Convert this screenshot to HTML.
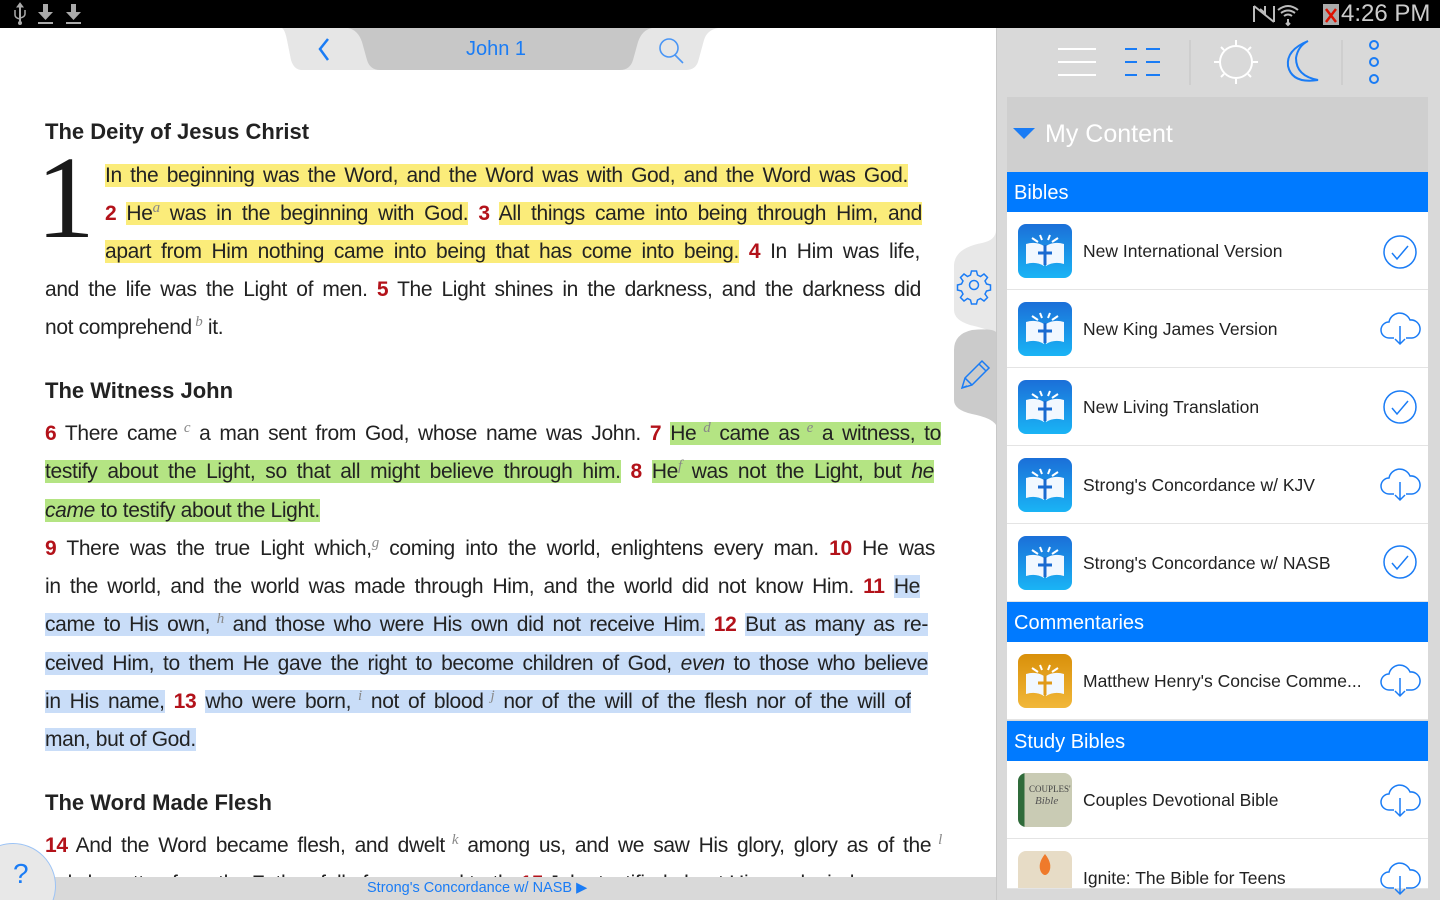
<!DOCTYPE html>
<html><head><meta charset="utf-8"><style>
*{margin:0;padding:0;box-sizing:border-box}
html,body{width:1440px;height:900px;overflow:hidden}
body{background:#fff;font-family:"Liberation Sans",sans-serif;position:relative}
.sb{position:absolute;left:0;top:0;width:1440px;height:28px;background:#000}
.ln{position:absolute;height:38px;line-height:38px;font-size:21px;color:#222;white-space:nowrap;letter-spacing:-0.35px}
.j{text-align:justify;text-align-last:justify;white-space:normal;overflow:hidden}
.n{color:#b3121a;font-weight:bold}
.y{background:#fbec7a}
.g{background:#b4e483}
.b{background:#c9ddf8}
sup{font-family:"Liberation Serif",serif;font-style:italic;color:#888;font-size:15px;vertical-align:8px;line-height:0}
.h{position:absolute;left:45px;font-size:22px;font-weight:bold;color:#222}
.rp{position:absolute;left:996px;top:28px;width:444px;height:872px;background:#d9d9d9;border-left:1px solid #c8c8c8}
.sec{position:absolute;left:1007px;width:421px;height:40px;background:#007aff;color:#fff;font-size:20px;line-height:42px;padding-left:7px}
.row{position:absolute;left:1007px;width:421px;height:78px;background:#fff;border-bottom:1px solid #e4e4e4}
.row .t{position:absolute;left:76px;top:0;line-height:78px;font-size:17.5px;color:#222}
.row .ic{position:absolute;left:11px;top:12px;width:54px;height:54px;border-radius:8px}
</style></head><body>
<div class="sb">
<svg width="100" height="28" style="position:absolute;left:8px;top:0">
<g fill="#aaa" stroke="#aaa"><line x1="12" y1="5" x2="12" y2="24" stroke-width="2"/><path d="M7 10 v5 q0 3 5 4 M17 10 v4 q0 3 -5 4" fill="none" stroke-width="1.5"/><circle cx="12" cy="23" r="1.5"/><path d="M9 7 l3-4 3 4z"/>
<rect x="35" y="4" width="5" height="9" stroke="none"/><path d="M30 12h15l-7.5 8z" stroke="none"/><rect x="30" y="22" width="15" height="2" stroke="none"/>
<rect x="63" y="4" width="5" height="9" stroke="none"/><path d="M58 12h15l-7.5 8z" stroke="none"/><rect x="58" y="22" width="15" height="2" stroke="none"/></g></svg>
<svg width="90" height="28" style="position:absolute;left:1250px;top:0"><g stroke="#bbb" fill="none" stroke-width="2"><path d="M4 6v16M4 6l20 16M24 6v16M10 9l5 4v-7"/><path d="M48 10q-10-8-20 0M45 13q-7-5-14 0M42 16q-4-3-8 0"/><path d="M38 19v6M36 23l2 2 2-2"/></g><rect x="73" y="4" width="16" height="21" fill="#aaa"/><path d="M76 9l10 13M86 9l-10 13" stroke="#d10" stroke-width="2.5"/></svg>
<div style="position:absolute;left:1341px;top:0;color:#ccc;font-size:24px;line-height:28px">4:26 PM</div>
</div>

<svg width="440" height="44" style="position:absolute;left:282px;top:28px">
<path d="M0 0 H436 Q425 2 422 12 L416 34 Q413 42 404 42 H20 Q12 42 9 32 L5 12 Q3 2 0 0Z" fill="#e6e6e6"/>
<path d="M62 0 H370 Q360 2 356 14 L351 32 Q348 42 338 42 H98 Q88 42 85 32 L80 14 Q76 2 66 0Z" fill="#c7c7c7"/>
<path d="M46 11 L38 21 L46 32" stroke="#1a7cf5" stroke-width="2.5" fill="none"/>
<circle cx="387" cy="20" r="9" stroke="#4a96f5" stroke-width="1.6" fill="none"/><line x1="393" y1="27" x2="401" y2="35" stroke="#4a96f5" stroke-width="1.6"/>
</svg>
<div style="position:absolute;left:466px;top:38px;color:#1a7cf5;font-size:20px">John 1</div>

<div class="h" style="top:119px">The Deity of Jesus Christ</div>
<div style="position:absolute;left:36px;top:138px;font-family:'Liberation Serif',serif;font-size:118px;line-height:120px;color:#1a1a1a">1</div>

<div class="ln j" style="left:105px;top:157px;width:803px"><span class="y">In the beginning was the Word, and the Word was with God, and the Word was God.</span></div>
<div class="ln j" style="left:105px;top:195px;width:817px"><span class="n">2</span> <span class="y">He<sup>a</sup> was in the beginning with God.</span> <span class="n">3</span> <span class="y">All things came into being through Him, and</span></div>
<div class="ln j" style="left:105px;top:233px;width:815px"><span class="y">apart from Him nothing came into being that has come into being.</span> <span class="n">4</span> In Him was life,</div>
<div class="ln j" style="left:45px;top:271px;width:876px">and the life was the Light of men. <span class="n">5</span> The Light shines in the darkness, and the darkness did</div>
<div class="ln" style="left:45px;top:309px">not comprehend<sup> b</sup> it.</div>

<div class="h" style="top:378px">The Witness John</div>
<div class="ln j" style="left:45px;top:415px;width:896px"><span class="n">6</span> There came<sup> c</sup> a man sent from God, whose name was John. <span class="n">7</span> <span class="g">He<sup> d</sup> came as<sup> e</sup> a witness, to</span></div>
<div class="ln j" style="left:45px;top:453px;width:889px"><span class="g">testify about the Light, so that all might believe through him.</span> <span class="n">8</span> <span class="g">He<sup>f</sup> was not the Light, but <i>he</i></span></div>
<div class="ln" style="left:45px;top:492px"><span class="g"><i>came</i> to testify about the Light.</span></div>
<div class="ln j" style="left:45px;top:530px;width:890px"><span class="n">9</span> There was the true Light which,<sup>g</sup> coming into the world, enlightens every man. <span class="n">10</span> He was</div>
<div class="ln j" style="left:45px;top:568px;width:875px">in the world, and the world was made through Him, and the world did not know Him. <span class="n">11</span> <span class="b">He</span></div>
<div class="ln j" style="left:45px;top:606px;width:883px"><span class="b">came to His own,<sup> h</sup> and those who were His own did not receive Him.</span> <span class="n">12</span> <span class="b">But as many as re-</span></div>
<div class="ln j" style="left:45px;top:645px;width:883px"><span class="b">ceived Him, to them He gave the right to become children of God, <i>even</i> to those who believe</span></div>
<div class="ln j" style="left:45px;top:683px;width:866px"><span class="b">in His name,</span> <span class="n">13</span> <span class="b">who were born,<sup> i</sup> not of blood<sup> j</sup> nor of the will of the flesh nor of the will of</span></div>
<div class="ln" style="left:45px;top:721px"><span class="b">man, but of God.</span></div>

<div class="h" style="top:790px">The Word Made Flesh</div>
<div class="ln j" style="left:45px;top:827px;width:897px"><span class="n">14</span> And the Word became flesh, and dwelt<sup> k</sup> among us, and we saw His glory, glory as of the<sup> l</sup></div>
<div class="ln" style="left:45px;top:865px;height:12px;overflow:hidden;line-height:38px">only begotten from the Father, full of grace and truth. <span class="n">15</span> John testified about Him and cried</div>

<div style="position:absolute;left:0;top:877px;width:996px;height:23px;background:#d9d9d9"></div>
<div style="position:absolute;left:367px;top:880px;color:#1a7cf5;font-size:14.5px">Strong's Concordance w/ NASB ▶</div>
<div style="position:absolute;left:0;top:840px;width:60px;height:60px;overflow:hidden">
<div style="position:absolute;left:-30px;top:3px;width:86px;height:86px;border-radius:50%;background:#e8e8e8;border:1px solid #9cc3f5"></div>
<div style="position:absolute;left:13px;top:18px;color:#1a7cf5;font-size:28px">?</div></div>

<svg width="44" height="210" style="position:absolute;left:952px;top:230px">
<path d="M44 0 Q44 10 30 13 Q3 18 2 35 V80 Q2 90 18 95 Q40 100 44 105Z" fill="#e8e8e8"/>
<path d="M44 102 Q40 98 20 100 Q2 104 2 120 V170 Q2 180 20 184 Q40 188 44 195Z" fill="#cbcbcb"/>
<g stroke="#1a7cf5" stroke-width="1.5" fill="none"><circle cx="22" cy="55" r="4.5"/>
<path d="M19.5 41h5l1 4 3 1.5 3.5-2.5 3.5 3.5-2.5 3.5 1.5 3 4 1v5l-4 1-1.5 3 2.5 3.5-3.5 3.5-3.5-2.5-3 1.5-1 4h-5l-1-4-3-1.5-3.5 2.5-3.5-3.5 2.5-3.5-1.5-3-4-1v-5l4-1 1.5-3-2.5-3.5 3.5-3.5 3.5 2.5 3-1.5z"/>
<path d="M10 158l3-10 17-17 7 7-17 17z M13 148l7 7 M27 134l7 7 M10 158l5-2"/></g></svg>

<div class="rp"></div>
<svg width="444" height="70" style="position:absolute;left:996px;top:28px">
<g stroke="#fff" stroke-width="2"><path d="M62 21h38M62 34h38M62 47h38"/></g>
<g stroke="#1a7cf5" stroke-width="2"><path d="M129 21h12M129 34h12M129 47h12M150 21h14M150 34h14M150 47h14"/></g>
<path d="M194 12v45M346 12v45" stroke="#c3c3c3" stroke-width="1"/>
<g stroke="#fff" stroke-width="2" fill="none"><circle cx="240" cy="34" r="16"/><path d="M240 12v5M240 51v5M218 34h5M257 34h5M225 19l3 3M255 19l-3 3M225 49l3-3M255 49l-3-3"/></g>
<path d="M312 13 Q290 22 292 38 Q296 56 322 52 Q300 48 300 30 Q302 18 312 13Z" stroke="#1a7cf5" stroke-width="2" fill="none"/>
<g stroke="#1a7cf5" stroke-width="2" fill="none"><circle cx="378" cy="17" r="4"/><circle cx="378" cy="34" r="4"/><circle cx="378" cy="51" r="4"/></g></svg>

<div style="position:absolute;left:1007px;top:97px;width:421px;height:75px;background:#cfcfcf"></div>
<svg width="24" height="16" style="position:absolute;left:1013px;top:126px"><path d="M0 2h22l-11 11z" fill="#1a7cf5"/></svg>
<div style="position:absolute;left:1045px;top:120px;color:#fff;font-size:25px">My Content</div>

<div class="sec" style="top:172px">Bibles</div>
<div class="row" style="top:212px"><div class="ic" style="background:linear-gradient(#1b6fd8,#1ab4f5)"></div><div class="t">New International Version</div></div>
<div class="row" style="top:290px"><div class="ic" style="background:linear-gradient(#1b6fd8,#1ab4f5)"></div><div class="t">New King James Version</div></div>
<div class="row" style="top:368px"><div class="ic" style="background:linear-gradient(#1b6fd8,#1ab4f5)"></div><div class="t">New Living Translation</div></div>
<div class="row" style="top:446px"><div class="ic" style="background:linear-gradient(#1b6fd8,#1ab4f5)"></div><div class="t">Strong's Concordance w/ KJV</div></div>
<div class="row" style="top:524px"><div class="ic" style="background:linear-gradient(#1b6fd8,#1ab4f5)"></div><div class="t">Strong's Concordance w/ NASB</div></div>
<div class="sec" style="top:602px">Commentaries</div>
<div class="row" style="top:642px"><div class="ic" style="background:linear-gradient(#d9900a,#f1b739)"></div><div class="t">Matthew Henry's Concise Comme...</div></div>
<div class="sec" style="top:721px">Study Bibles</div>
<div class="row" style="top:761px"><div class="ic" style="background:linear-gradient(90deg,#2f6b3a 0,#2f6b3a 12%,#c9cbb4 12%)"></div><div class="t">Couples Devotional Bible</div></div>
<div class="row" style="top:839px;height:50px;overflow:hidden"><div class="ic" style="background:#e7dcc6;height:60px"></div><div class="t">Ignite: The Bible for Teens</div></div>

<svg width="444" height="700" style="position:absolute;left:1007px;top:212px">
<defs>
<g id="bk"><path d="M-19 -8 q10 -3 18 2 v20 q-8 -5 -18 -2z M19 -8 q-10 -3 -18 2 v20 q8 -5 18 -2z" fill="#f2f8ff"/><path d="M0 -7v20M-7 1h14" stroke="#1a6ad0" stroke-width="3"/><path d="M-13 -14l6 4M13 -14l-6 4M-5 -17l2 5M5 -17l-2 5" stroke="#fff" stroke-width="2"/></g>
<g id="bko"><path d="M-19 -8 q10 -3 18 2 v20 q-8 -5 -18 -2z M19 -8 q-10 -3 -18 2 v20 q8 -5 18 -2z" fill="#f2f8ff"/><path d="M0 -7v20M-7 1h14" stroke="#e09a1a" stroke-width="3"/><path d="M-13 -14l6 4M13 -14l-6 4M-5 -17l2 5M5 -17l-2 5" stroke="#fff" stroke-width="2"/></g>
<g id="ck"><circle r="16" fill="none" stroke="#1a7cf5" stroke-width="1.5"/><path d="M-8 1l5 6 11-13" fill="none" stroke="#1a7cf5" stroke-width="1.5"/></g>
<g id="cl"><path d="M-6 10 h-5 a8 8 0 0 1 0-16 a11 11 0 0 1 21-2 a8 8 0 0 1 2 18 h-6" fill="none" stroke="#1a7cf5" stroke-width="1.5"/><path d="M0 -2v18M-5 11l5 5 5-5" fill="none" stroke="#1a7cf5" stroke-width="1.5"/></g>
</defs>
<use href="#bk" x="38" y="40"/><use href="#bk" x="38" y="118"/><use href="#bk" x="38" y="196"/><use href="#bk" x="38" y="274"/><use href="#bk" x="38" y="352"/>
<use href="#bko" x="38" y="470"/>
<use href="#ck" x="393" y="40"/><use href="#cl" x="393" y="116"/><use href="#ck" x="393" y="195"/><use href="#cl" x="393" y="272"/><use href="#ck" x="393" y="350"/>
<use href="#cl" x="393" y="468"/><use href="#cl" x="393" y="588"/><use href="#cl" x="393" y="666"/>
<text x="22" y="580" font-family="Liberation Serif" font-size="9" fill="#444">COUPLES'</text>
<text x="28" y="592" font-family="Liberation Serif" font-style="italic" font-size="11" fill="#555">Bible</text>
<path d="M38 642 q-8 10 -4 18 q4 6 8 0 q4-8 -4-18z" fill="#ef7a2b"/>
</svg>
</body></html>
